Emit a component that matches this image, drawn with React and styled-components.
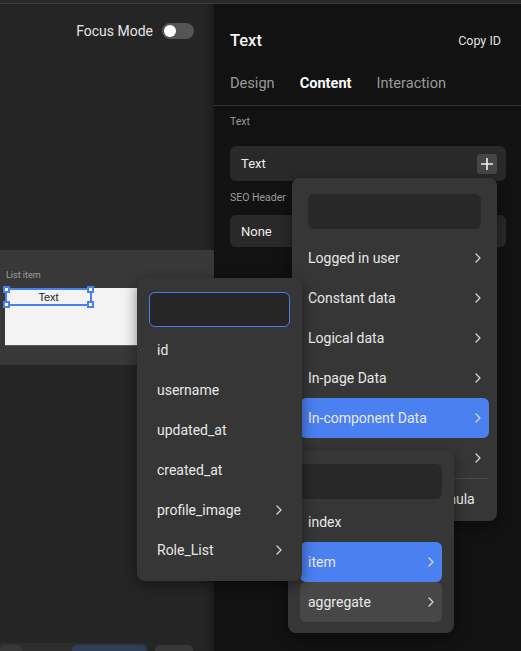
import React from 'react';
import styled, { createGlobalStyle } from 'styled-components';

const GlobalStyle = createGlobalStyle`
	html, body {
		margin: 0;
		padding: 0;
		background: #121212;
	}
	* {
		box-sizing: border-box;
	}
`;

const MAIN_ITEMS = [
	{ label: 'Logged in user', more: true },
	{ label: 'Constant data', more: true },
	{ label: 'Logical data', more: true },
	{ label: 'In-page Data', more: true },
	{ label: 'In-component Data', more: true, active: 'blue' },
	{ label: 'Server-side data', more: true },
];

const FIELD_ITEMS = [
	{ label: 'id' },
	{ label: 'username' },
	{ label: 'updated_at' },
	{ label: 'created_at' },
	{ label: 'profile_image', more: true },
	{ label: 'Role_List', more: true },
];

const COMPONENT_ITEMS = [
	{ label: 'index' },
	{ label: 'item', more: true, active: 'blue' },
	{ label: 'aggregate', more: true, active: 'gray' },
];

const Chevron = () => (
	<svg width="6" height="10" viewBox="0 0 6 10" fill="none">
		<path d="M1 1l4 4-4 4" stroke="#d8d8d8" strokeWidth="1.2" strokeLinecap="round" strokeLinejoin="round" />
	</svg>
);

const MenuItems = ({ items }) =>
	items.map(({ label, more, active }) => (
		<MenuItem key={label} $active={active}>
			<span>{label}</span>
			{more && <Chevron />}
		</MenuItem>
	));

const App = () => {
	return (
		<Root>
			<GlobalStyle />
			<TopStrip />
			<Main>
				<Canvas>
					<FocusRow>
						<FocusLabel>Focus Mode</FocusLabel>
						<Toggle>
							<Knob />
						</Toggle>
					</FocusRow>
					<CanvasStrip>
						<ElementLabel>List item</ElementLabel>
						<ListBox>
							<Selected>
								Text
								<Handle $top $left />
								<Handle $top />
								<Handle $left />
								<Handle />
							</Selected>
						</ListBox>
					</CanvasStrip>
					<BottomBar>
						<BarChip $w={22} />
						<BarChip $w={74} $blue $ml={50} />
						<BarChip $w={38} $ml={9} />
					</BottomBar>
				</Canvas>
				<Panel>
					<PanelHeader>
						<PanelTitle>Text</PanelTitle>
						<CopyId>Copy ID</CopyId>
					</PanelHeader>
					<Tabs>
						<Tab>Design</Tab>
						<Tab $active>Content</Tab>
						<Tab>Interaction</Tab>
					</Tabs>
					<Form>
						<FieldLabel>Text</FieldLabel>
						<Field $h={35}>
							<span>Text</span>
							<PlusButton>
								<svg width="14" height="14" viewBox="0 0 14 14">
									<path d="M7 1v12M1 7h12" stroke="#f0f0f0" strokeWidth="1.6" />
								</svg>
							</PlusButton>
						</Field>
						<FieldLabel $mt={10}>SEO Header</FieldLabel>
						<Field $h={32} $mt={10}>
							<span>None</span>
						</Field>
					</Form>
				</Panel>
			</Main>

			<Menu $left={292} $top={178} $width={205} $z={1} $pad="16px 8px 2px">
				<Search $mx={8} />
				<ItemList $mt={9}>
					<MenuItems items={MAIN_ITEMS} />
					<Divider />
					<MenuItem>
						<span>Calculated using a formula</span>
					</MenuItem>
				</ItemList>
			</Menu>

			<Menu $left={288} $top={450} $width={166} $z={2} $pad="14px 12px 11px">
				<Search />
				<ItemList $mt={3}>
					<MenuItems items={COMPONENT_ITEMS} />
				</ItemList>
			</Menu>

			<Menu $left={137} $top={278} $width={165} $z={3} $pad="14px 12px 11px">
				<Search $focused />
				<ItemList $mt={3}>
					<MenuItems items={FIELD_ITEMS} />
				</ItemList>
			</Menu>
		</Root>
	);
};

const Root = styled.div`
	position: relative;
	width: 521px;
	height: 651px;
	overflow: hidden;
	display: flex;
	flex-direction: column;
	font-family: Roboto, 'Noto Sans', sans-serif;
	color: #e8e8e8;
	background: #121212;
`;

const TopStrip = styled.div`
	height: 4px;
	flex-shrink: 0;
	background: #2a2a2a;
	border-bottom: 1px solid #3c3c3c;
`;

const Main = styled.div`
	flex: 1;
	display: flex;
	min-height: 0;
`;

const Canvas = styled.div`
	width: 214px;
	flex-shrink: 0;
	display: flex;
	flex-direction: column;
	background: #252525;
	box-shadow: inset -8px 0 8px -6px rgba(0, 0, 0, 0.35);
`;

const FocusRow = styled.div`
	display: flex;
	justify-content: flex-end;
	align-items: center;
	gap: 9px;
	padding: 19px 20px 0 0;
`;

const FocusLabel = styled.span`
	font-size: 14px;
	line-height: 16px;
	color: #e4e4e4;
`;

const Toggle = styled.div`
	width: 32px;
	height: 16px;
	border-radius: 8px;
	background: #555;
	display: flex;
	align-items: center;
	padding: 0 2px;
`;

const Knob = styled.div`
	width: 12px;
	height: 12px;
	border-radius: 50%;
	background: #fff;
`;

const CanvasStrip = styled.div`
	margin-top: 211px;
	height: 115px;
	background: #383838;
	padding: 19px 0 0 5px;
	display: flex;
	flex-direction: column;
`;

const ElementLabel = styled.span`
	font-size: 9px;
	line-height: 12px;
	color: #a0a0a0;
	padding-left: 1px;
`;

const ListBox = styled.div`
	margin-top: 7px;
	width: 150px;
	height: 58px;
	background: #f3f3f3;
	border-bottom: 1px solid #5a5a5a;
`;

const Selected = styled.div`
	position: relative;
	width: 87px;
	height: 18px;
	border: 2px solid #4a7ff0;
	display: flex;
	align-items: center;
	justify-content: center;
	font-size: 11px;
	color: #222;
	font-family: 'Liberation Sans', Arial, sans-serif;
`;

const Handle = styled.span`
	position: absolute;
	width: 7px;
	height: 7px;
	background: #fff;
	border: 2px solid #4a7ff0;
	${props => (props.$top ? 'top: -4px;' : 'bottom: -4px;')}
	${props => (props.$left ? 'left: -4px;' : 'right: -4px;')}
`;

const BottomBar = styled.div`
	margin-top: auto;
	height: 8px;
	width: 148px;
	background: #2e2e2e;
	display: flex;
	align-items: flex-end;
	border-radius: 0 6px 0 0;
`;

const BarChip = styled.div`
	flex-shrink: 0;
	width: ${props => props.$w}px;
	height: 6px;
	margin-left: ${props => props.$ml || 0}px;
	border-radius: 5px 5px 0 0;
	background: ${props => (props.$blue ? '#2c3f58' : '#383838')};
`;

const Panel = styled.div`
	flex: 1;
	display: flex;
	flex-direction: column;
	background: #121212;
`;

const PanelHeader = styled.div`
	display: flex;
	justify-content: space-between;
	align-items: center;
	height: 22px;
	margin-top: 25px;
	padding: 0 20px 0 16px;
`;

const PanelTitle = styled.span`
	font-size: 16.5px;
	font-weight: 500;
	color: #f4f4f4;
`;

const CopyId = styled.span`
	font-size: 12.5px;
	color: #e0e0e0;
`;

const Tabs = styled.div`
	display: flex;
	gap: 25px;
	margin-top: 22px;
	padding: 0 16px 12px;
	border-bottom: 1px solid #333;
`;

const Tab = styled.span`
	font-size: 14.6px;
	line-height: 20px;
	font-weight: ${props => (props.$active ? 700 : 400)};
	color: ${props => (props.$active ? '#fafafa' : '#9a9a9a')};
`;

const Form = styled.div`
	display: flex;
	flex-direction: column;
	padding: 0 15px 0 16px;
`;

const FieldLabel = styled.span`
	margin-top: ${props => props.$mt || 9}px;
	font-size: 10.5px;
	line-height: 14px;
	color: #9c9c9c;
`;

const Field = styled.div`
	margin-top: ${props => props.$mt || 17}px;
	height: ${props => props.$h}px;
	border-radius: 6px;
	background: #292929;
	display: flex;
	align-items: center;
	justify-content: space-between;
	padding: 0 9px 0 11px;
	font-size: 13px;
	color: #ececec;
`;

const PlusButton = styled.div`
	width: 20px;
	height: 20px;
	border-radius: 3px;
	background: #464646;
	display: flex;
	align-items: center;
	justify-content: center;
`;

const Menu = styled.div`
	position: absolute;
	left: ${props => props.$left}px;
	top: ${props => props.$top}px;
	width: ${props => props.$width}px;
	z-index: ${props => props.$z};
	padding: ${props => props.$pad};
	background: #363636;
	border-radius: 8px;
	box-shadow: 0 4px 14px rgba(0, 0, 0, 0.45);
	display: flex;
	flex-direction: column;
`;

const Search = styled.div`
	height: 35px;
	margin: 0 ${props => props.$mx || 0}px;
	border-radius: 6px;
	background: ${props => (props.$focused ? '#262626' : '#282828')};
	border: ${props => (props.$focused ? '1px solid #4a7cf0' : 'none')};
`;

const ItemList = styled.div`
	margin-top: ${props => props.$mt}px;
	display: flex;
	flex-direction: column;
`;

const MenuItem = styled.div`
	height: 40px;
	display: flex;
	align-items: center;
	justify-content: space-between;
	padding: 0 8px;
	border-radius: 6px;
	font-size: 14px;
	color: #e8e8e8;
	white-space: nowrap;
	overflow: hidden;
	background: ${props =>
		props.$active === 'blue' ? '#4a80f0' : props.$active === 'gray' ? '#474747' : 'transparent'};
`;

const Divider = styled.div`
	height: 1px;
	background: #4a4a4a;
`;

export default App;
